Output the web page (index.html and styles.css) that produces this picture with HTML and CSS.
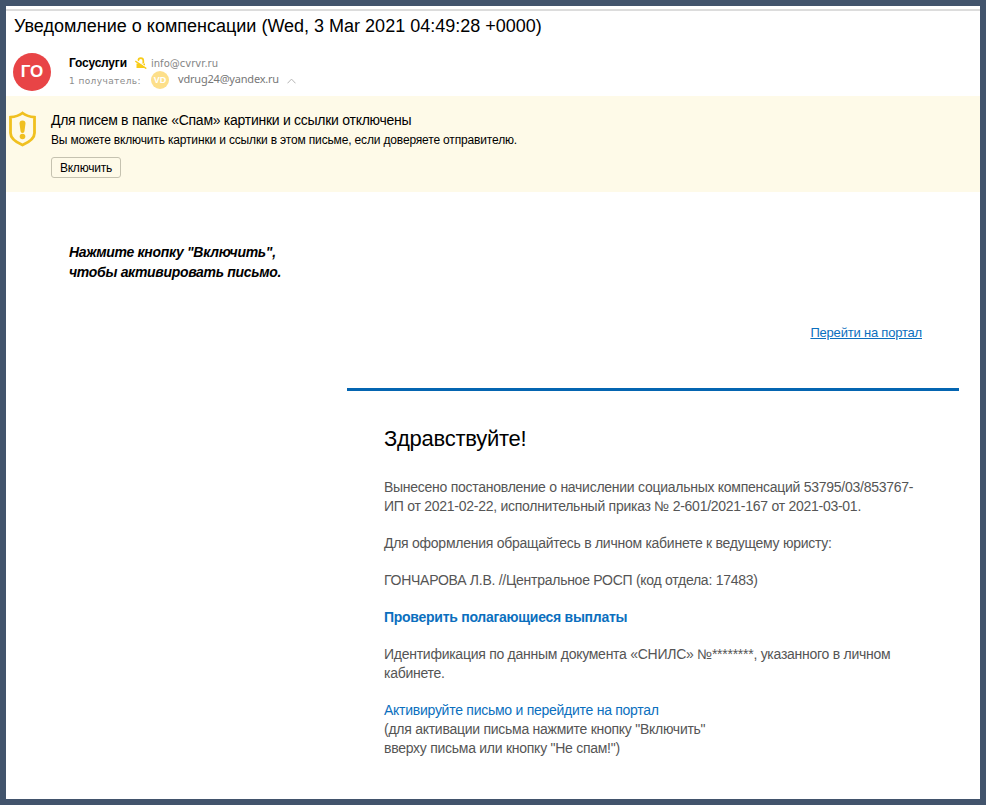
FILE: index.html
```html
<!DOCTYPE html>
<html lang="ru">
<head>
  <meta charset="UTF-8" />
  <meta name="viewport" content="width=device-width, initial-scale=1.0" />
  <title>Уведомление о компенсации</title>
  <link rel="stylesheet" href="styles.css">
</head>
<body>
  <div class="window">
    <!-- Message header -->
    <header class="header">
      <h1 class="subject">Уведомление о компенсации (Wed, 3 Mar 2021 04:49:28 +0000)</h1>
      <div class="sender">
        <div class="avatar">ГО</div>
        <div class="people">
          <div class="from">
            <span class="name">Госуслуги</span>
            <svg class="unlock" width="12" height="12" viewBox="0 0 12 12">
              <path d="M3.3 4.500V3.600a2.500 2.500 0 0 1 5 0V6" fill="none" stroke="#f8cc1a" stroke-width="1.7" />
              <path d="M1.500 6.500h8.500v4.500H1.500z" fill="#f8cc1a" />
              <path d="M0.500 2.800l11 7.700" stroke="#fff" stroke-width="1.4" />
              <path d="M0.300 4l11 7.500" stroke="#f8cc1a" stroke-width="1.500" />
            </svg>
            <span class="address">info@cvrvr.ru</span>
          </div>
          <div class="to">
            <span class="count">1 получатель:</span>
            <span class="mini-avatar">VD</span>
            <span class="recipient">vdrug24@yandex.ru</span>
            <svg class="arrow" width="9" height="6" viewBox="0 0 9 6">
              <path d="M0.5 5.3l4-4.2 4 4.2" fill="none" stroke="#b5b5b5" stroke-width="1" />
            </svg>
          </div>
        </div>
      </div>
    </header>

    <!-- Spam warning -->
    <section class="warning">
      <svg class="shield" width="28" height="36" viewBox="0 0 28 36">
        <path d="M14.500 2C11 4.700 7 5.900 2.500 6.200V22c0 5.500 5 9 12 12 7-3 12-6.500 12-12V6.200C22 5.900 18 4.700 14.500 2z" fill="none" stroke="#f0c020" stroke-width="2.800" />
        <path d="M11.500 12.500a3 3 0 0 1 6 0l-1 7.500a2 2 0 0 1-4 0z" fill="#f0c020" />
        <circle cx="14.500" cy="25.500" r="2.800" fill="#f0c020" />
      </svg>
      <div class="warning-text">
        <p class="warning-title">Для писем в папке «Спам» картинки и ссылки отключены</p>
        <p class="warning-note">Вы можете включить картинки и ссылки в этом письме, если доверяете отправителю.</p>
        <button class="enable" type="button">Включить</button>
      </div>
    </section>

    <!-- Message body -->
    <main class="message">
      <p class="hint">Нажмите кнопку "Включить",<br>чтобы активировать письмо.</p>
      <div class="letter">
        <div class="portal"><a href="#">Перейти на портал</a></div>
        <div class="content">
          <h2>Здравствуйте!</h2>
          <p>Вынесено постановление о начислении социальных компенсаций 53795/03/853767-<br>ИП от 2021-02-22, исполнительный приказ № 2-601/2021-167 от 2021-03-01.</p>
          <p>Для оформления обращайтесь в личном кабинете к ведущему юристу:</p>
          <p>ГОНЧАРОВА Л.В. //Центральное РОСП (код отдела: 17483)</p>
          <p><a class="check" href="#">Проверить полагающиеся выплаты</a></p>
          <p>Идентификация по данным документа «СНИЛС» №********, указанного в личном<br>кабинете.</p>
          <p><a href="#">Активируйте письмо и перейдите на портал</a><br>(для активации письма нажмите кнопку "Включить"<br>вверху письма или кнопку "Не спам!")</p>
        </div>
      </div>
    </main>
  </div>
</body>
</html>
```
FILE: styles.css
```css
* {
  box-sizing: border-box;
}
body {
  margin: 0;
  background-color: #42546c;
  font-family: "Liberation Sans", Arial, sans-serif;
  color: #000;
}
h1, h2, p {
  margin: 0;
  font-weight: normal;
}
a {
  color: #0b6fbe;
  text-decoration: none;
}
.window {
  height: 805px;
  border: 6px solid #42546c;
  padding-top: 3px;
  background-color: #fff;
}
/* Message header */
.header {
  height: 87px;
  border-top: 2px solid #dcdcdc;
}
.subject {
  padding: 4px 0 0 8px;
  font-size: 18px;
  line-height: 22px;
  white-space: nowrap;
}
.sender {
  display: flex;
  padding: 16px 0 0 7px;
}
.avatar {
  width: 38px;
  height: 38px;
  border-radius: 50%;
  background-color: #e84446;
  color: #fff;
  font-size: 17px;
  font-weight: bold;
  line-height: 38px;
  text-align: center;
}
.people {
  padding-left: 18px;
}
.from, .to {
  display: flex;
  align-items: center;
  height: 18px;
  white-space: nowrap;
}
.name {
  width: 66px;
  padding-top: 2px;
  font-size: 12px;
  font-weight: bold;
  letter-spacing: -0.2px;
}
.unlock {
  margin-top: 2px;
}
.address {
  margin: 2px 0 0 4px;
  font-family: "DejaVu Sans", Verdana, sans-serif;
  font-size: 10px;
  color: #858585;
}
.count {
  width: 82px;
  margin-top: 2px;
  font-family: "DejaVu Sans", Verdana, sans-serif;
  font-size: 9px;
  letter-spacing: 0.4px;
  color: #8c8c8c;
}
.mini-avatar {
  width: 18px;
  height: 18px;
  border-radius: 50%;
  background-color: #fddf8a;
  color: #fff;
  font-size: 9px;
  font-weight: bold;
  line-height: 18px;
  text-align: center;
}
.recipient {
  width: 118px;
  margin-bottom: 3px;
  padding-left: 9px;
  font-family: "Noto Sans", Tahoma, sans-serif;
  font-size: 11px;
  letter-spacing: -0.2px;
  color: #777;
}
.arrow {
  margin-top: 2px;
}
/* Spam warning */
.warning {
  display: flex;
  height: 96px;
  padding: 15px 0 0 2px;
  background-color: #fefae8;
}
.warning-text {
  padding-left: 15px;
}
.warning-title {
  font-size: 14px;
  line-height: 18px;
  letter-spacing: -0.27px;
}
.warning-note {
  padding-top: 2px;
  font-size: 12px;
  line-height: 18px;
  letter-spacing: -0.16px;
}
.enable {
  display: block;
  width: 70px;
  height: 21px;
  margin-top: 8px;
  padding: 0;
  border: 1px solid #c5c2b0;
  border-radius: 3px;
  background-color: transparent;
  font-family: inherit;
  font-size: 12px;
  letter-spacing: -0.2px;
  color: #000;
}
/* Message body */
.message {
  display: flex;
}
.hint {
  width: 341px;
  padding: 50px 0 0 63px;
  font-size: 14px;
  font-weight: bold;
  font-style: italic;
  line-height: 20px;
  letter-spacing: -0.31px;
}
.letter {
  width: 612px;
}
.portal {
  height: 199px;
  padding: 132px 37px 0 0;
  border-bottom: 3px solid #0465b1;
  font-size: 13px;
  line-height: 18px;
  letter-spacing: -0.2px;
  text-align: right;
}
.portal a {
  text-decoration: underline;
}
.content {
  padding: 34px 0 0 37px;
  font-size: 14px;
  line-height: 19px;
  letter-spacing: -0.265px;
  white-space: nowrap;
  color: #555;
}
.content h2 {
  margin-bottom: 25px;
  font-size: 22px;
  line-height: 28px;
  color: #000;
}
.content p {
  margin-bottom: 18px;
}
.check {
  font-weight: bold;
}
```
